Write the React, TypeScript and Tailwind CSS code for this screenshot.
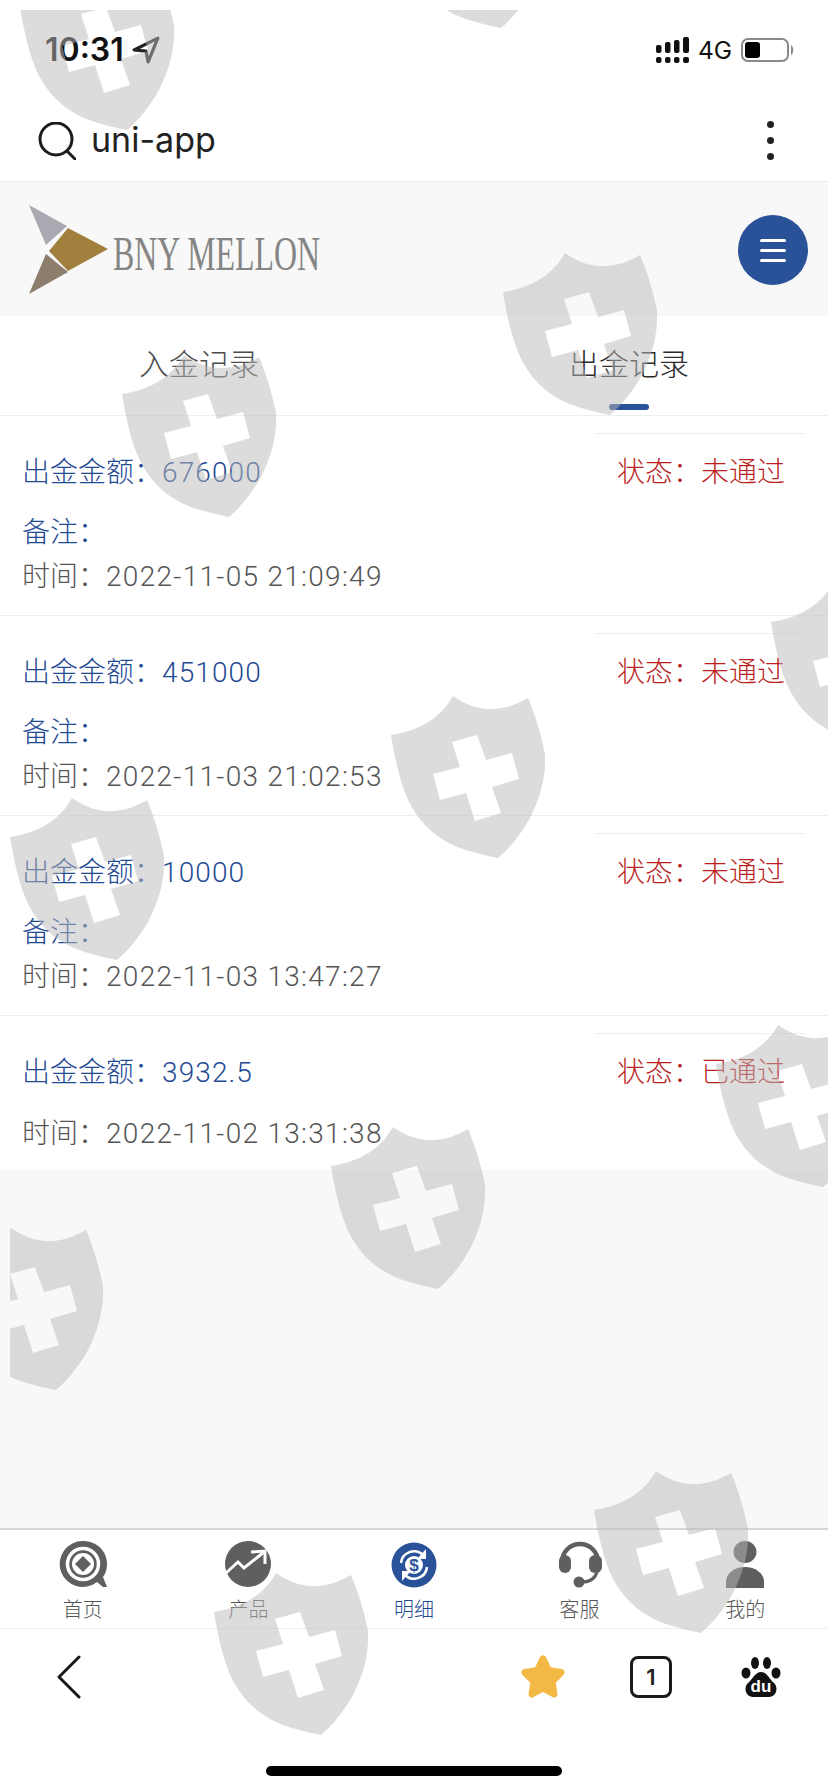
import React from "react";

const SANS = "font-['Roboto','Noto_Sans_CJK_SC',sans-serif]";
const shields: [number, number][] = [
  [20, -32], [394, -134], [503, 253], [122, 355], [771, 583], [391, 696], [10, 798],
  [716, 1025], [331, 1127], [-51, 1228], [594, 1471], [214, 1573],
];

function Watermarks() {
  return (
    <div className="absolute left-[10px] top-[10px] w-[818px] h-[1782px] overflow-hidden pointer-events-none">
      <svg width="818" height="1782" viewBox="10 10 818 1782">
        <defs>
          <path
            id="shield"
            fillRule="evenodd"
            d="M0 39C28 35 50 22 62 0C76 10 90 14 104 13C116 12 127 8 137 2C144 18 150 38 154 58C155 80 150 100 139 122C130 138 119 152 107 162C84 157 68 153 56 146C40 137 30 126 22 113C12 97 5 70 0 39ZM61 46L86 39L95 64L121 57L128 83L101 91L110 117L84 125L75 97L49 104L42 78L69 71Z"
          />
        </defs>
        {shields.map(([x, y], i) => (
          <use key={i} href="#shield" x={x} y={y} fill="rgb(185,185,185)" fillOpacity="0.5" />
        ))}
      </svg>
    </div>
  );
}

function StatusBar() {
  return (
    <div className="h-[100px] flex items-center pl-[45px] pr-[33px]">
      <span className="font-['Inter',sans-serif] font-semibold text-[32px] leading-none text-[#111]">10:31</span>
      <svg width="28" height="28" viewBox="0 0 26 26" className="ml-[8px]" fill="none">
        <path d="M24 2L2 13L13 14L15 24Z" stroke="#222" strokeWidth="3" strokeLinejoin="round" />
      </svg>
      <div className="ml-auto flex items-center">
        <svg width="34" height="26" viewBox="0 0 34 26" fill="#111">
          <rect x="0" y="8" width="5.5" height="8" rx="2" />
          <rect x="9" y="5" width="5.5" height="11" rx="2" />
          <rect x="18" y="3" width="5.5" height="13" rx="2" />
          <rect x="27" y="0" width="6" height="16" rx="2" />
          <rect x="0" y="20" width="5.5" height="6" rx="2" />
          <rect x="9" y="20" width="5.5" height="6" rx="2" />
          <rect x="18" y="20" width="5.5" height="6" rx="2" />
          <rect x="27" y="20" width="6" height="6" rx="2" />
        </svg>
        <span className="ml-[8px] font-['Inter',sans-serif] text-[24.5px] leading-none text-[#111]">4G</span>
        <div className="ml-[9px] w-[48px] h-[24px] rounded-[7px] border-2 border-[#8a8a8a] p-[2px]">
          <div className="w-[15px] h-full rounded-[3px] bg-black" />
        </div>
        <svg width="4" height="10" viewBox="0 0 4 10" className="ml-[2px]"><path d="M0 0C3 2 3 8 0 10Z" fill="#888" /></svg>
      </div>
    </div>
  );
}

function UrlBar() {
  return (
    <div className="h-[82px] border-b border-[#ececec] flex items-center pl-[38px] pr-[54px]">
      <svg width="38" height="38" viewBox="0 0 38 38" fill="none" stroke="#1c1c1c" strokeWidth="3">
        <circle cx="18" cy="17" r="16" />
        <path d="M29 29L37 37" strokeLinecap="round" />
      </svg>
      <span className="ml-[15px] font-['Inter',sans-serif] text-[34px] leading-none text-[#222] pb-[2px]">uni-app</span>
      <div className="ml-auto flex flex-col gap-[9px]">
        <div className="w-[7px] h-[7px] rounded-full bg-[#222]" />
        <div className="w-[7px] h-[7px] rounded-full bg-[#222]" />
        <div className="w-[7px] h-[7px] rounded-full bg-[#222]" />
      </div>
    </div>
  );
}

function LogoHeader() {
  return (
    <div className="h-[134px] bg-[#f8f8f8] flex items-center pl-[29px] pr-[20px]">
      <svg width="80" height="90" viewBox="0 0 80 90" className="mt-[2px]">
        <path d="M0 0L38 21L17 40Z" fill="#a9a9b1" />
        <path d="M39 23L79 44L39 66L20 46Z" fill="#a0803c" />
        <path d="M17 49L39 67L0 89Z" fill="#8c7d6d" />
      </svg>
      <div className="ml-[4px] w-[206px] mt-[10px]">
        <div className="origin-left scale-x-[0.665] whitespace-nowrap font-['Liberation_Serif',serif] text-[48px] leading-none text-[#858585]">BNY MELLON</div>
      </div>
      <div className="ml-auto w-[70px] h-[70px] rounded-full bg-[#2a5298] flex flex-col items-center justify-center gap-[7px] mt-[2px]">
        <div className="w-[26px] h-[3px] bg-white rounded-sm" />
        <div className="w-[26px] h-[3px] bg-white rounded-sm" />
        <div className="w-[26px] h-[3px] bg-white rounded-sm" />
      </div>
    </div>
  );
}

function Tabs() {
  return (
    <div className="h-[99px] bg-white grid grid-cols-2 gap-8 text-[30px] leading-[40px] font-light text-center">
      <div className="pt-[29px] text-[#4d4d4d]">入金记录</div>
      <div className="pt-[29px] text-[#2b2b2b] flex flex-col items-center">
        <span>出金记录</span>
        <div className="mt-[19px] w-[40px] h-[6px] rounded-full bg-[#2a5298]" />
      </div>
    </div>
  );
}

type Row = { amount: string; time: string; status: string; note: boolean };
const rows: Row[] = [
  { amount: "676000", time: "2022-11-05 21:09:49", status: "未通过", note: true },
  { amount: "451000", time: "2022-11-03 21:02:53", status: "未通过", note: true },
  { amount: "10000", time: "2022-11-03 13:47:27", status: "未通过", note: true },
  { amount: "3932.5", time: "2022-11-02 13:31:38", status: "已通过", note: false },
];

function RecordRow({ r }: { r: Row }) {
  return (
    <div className={`${r.note ? "h-[200px]" : "h-[155px]"} border-t border-[#eeeeee] bg-white flex justify-between text-[28px] leading-[40px] font-light`}>
      <div className="pl-[22px] pt-[37px]">
        <div className="text-[#1f4a94] h-[40px]">
          出金金额：<span className="tracking-[1.1px]">{r.amount}</span>
        </div>
        {r.note ? <div className="text-[#1f4a94] h-[40px] mt-[20px]">备注：</div> : null}
        <div className={`text-[#555] h-[40px] ${r.note ? "mt-[4px]" : "mt-[21px]"}`}>
          时间：<span className="tracking-[1.3px]">{r.time}</span>
        </div>
      </div>
      <div className="mt-[17px] mr-[23px] w-[210px] h-[62px] border-t border-[#eeeeee] pl-[22px] pt-[19px] text-[#bb1f1f] whitespace-nowrap">
        状态：{r.status}
      </div>
    </div>
  );
}

const gray = "#5f5f5f";
const NavIcons: Record<string, React.ReactNode> = {
  home: (
    <svg width="48" height="48" viewBox="0 0 48 48">
      <path d="M24 1A23 23 0 1 0 38 42L44 47H48L44 37A23 23 0 0 0 24 1Z" fill={gray} />
      <circle cx="24" cy="24" r="15.5" fill="none" stroke="#fff" strokeWidth="3.5" />
      <circle cx="24" cy="24" r="11" fill="#fff" />
      <path d="M24 16L32 24L24 32L16 24Z" fill={gray} />
    </svg>
  ),
  chart: (
    <svg width="48" height="48" viewBox="0 0 48 48">
      <circle cx="24" cy="24" r="23" fill={gray} />
      <path d="M2 33L14 22L20 28L40 12" fill="none" stroke="#fff" strokeWidth="3" />
      <path d="M27 12L41 11L41 24" fill="none" stroke="#fff" strokeWidth="3" />
    </svg>
  ),
  money: (
    <svg width="48" height="48" viewBox="0 0 48 48">
      <circle cx="24" cy="25" r="22.5" fill="#2a5298" />
      <circle cx="24" cy="25" r="9" fill="#fff" />
      <text x="24" y="31" textAnchor="middle" fontSize="17" fontWeight="700" fontFamily="Liberation Sans" fill="#2a5298">$</text>
      <path d="M11 23A13 13 0 0 1 33 15" fill="none" stroke="#fff" strokeWidth="2.5" />
      <path d="M37 27A13 13 0 0 1 15 35" fill="none" stroke="#fff" strokeWidth="2.5" />
      <path d="M36 9V19H27Z" fill="#fff" />
      <path d="M12 41V31H21Z" fill="#fff" />
    </svg>
  ),
  service: (
    <svg width="48" height="48" viewBox="0 0 48 48">
      <path d="M6 22A18 18 0 0 1 42 22" fill="none" stroke={gray} strokeWidth="4.5" />
      <rect x="3" y="15" width="12" height="18" rx="6" fill={gray} />
      <rect x="33" y="15" width="13" height="18" rx="6" fill={gray} />
      <path d="M41 32C39 39 33 42 26 42" fill="none" stroke={gray} strokeWidth="3" />
      <circle cx="23" cy="42" r="5.5" fill={gray} />
    </svg>
  ),
  user: (
    <svg width="48" height="48" viewBox="0 0 48 48">
      <ellipse cx="24" cy="12" rx="11.5" ry="11" fill={gray} />
      <path d="M5 48V42C5 33 14 27 24 27C34 27 43 33 43 42V48Z" fill={gray} />
    </svg>
  ),
};

const navItems = [
  { key: "home", label: "首页" },
  { key: "chart", label: "产品" },
  { key: "money", label: "明细", active: true },
  { key: "service", label: "客服" },
  { key: "user", label: "我的" },
];

function BottomNav() {
  return (
    <div className="border-t-2 border-b border-t-[#d6d6d6] border-b-[#eeeeee] bg-white h-[101px] grid grid-cols-5">
      {navItems.map((n) => (
        <div key={n.key} className="flex flex-col items-center pt-[10px]">
          {NavIcons[n.key]}
          <span className={`mt-[10px] text-[20px] leading-[24px] font-light ${n.active ? "text-[#1f4a94]" : "text-[#555]"}`}>{n.label}</span>
        </div>
      ))}
    </div>
  );
}

function Toolbar() {
  return (
    <div className="bg-white flex-none h-[163px]">
      <div className="h-[95px] flex items-center pl-[56px] pr-[47px]">
        <svg width="26" height="44" viewBox="0 0 26 44" fill="none">
          <path d="M23 2L3 22L23 42" stroke="#1a1a1a" strokeWidth="3" strokeLinecap="round" strokeLinejoin="round" />
        </svg>
        <svg width="46" height="44" viewBox="0 0 46 44" className="ml-auto">
          <path
            d="M23 4L28.5 15.5L41 17.5L32 26.5L34 39L23 33L12 39L14 26.5L5 17.5L17.5 15.5Z"
            fill="#f4b844"
            stroke="#f4b844"
            strokeWidth="7"
            strokeLinejoin="round"
          />
        </svg>
        <div className="ml-[64px] w-[42px] h-[42px] rounded-[8px] border-[3px] border-[#1a1a1a] flex items-center justify-center font-['Inter',sans-serif] font-semibold text-[22px] leading-none text-[#222]">
          1
        </div>
        <svg width="40" height="42" viewBox="0 0 40 42" className="ml-[69px]">
          <ellipse cx="5" cy="17" rx="4.5" ry="5.5" fill="#111" />
          <ellipse cx="14" cy="7" rx="4" ry="6" fill="#111" />
          <ellipse cx="26" cy="7" rx="4" ry="6" fill="#111" />
          <ellipse cx="35" cy="17" rx="4.5" ry="5.5" fill="#111" />
          <path d="M20 16C14 16 12 23 7 27C2 32 5 41 12 41H28C35 41 38 32 33 27C28 23 26 16 20 16Z" fill="#111" />
          <text x="20" y="36" textAnchor="middle" fontSize="17" fontWeight="700" fontFamily="Liberation Sans" fill="#fff">du</text>
        </svg>
      </div>
      <div className="mt-[42px] mx-auto w-[296px] h-[10px] rounded-full bg-black" />
    </div>
  );
}

export default function App() {
  return (
    <div className={`relative w-[828px] h-[1792px] bg-white flex flex-col overflow-hidden ${SANS}`}>
      <StatusBar />
      <UrlBar />
      <LogoHeader />
      <Tabs />
      {rows.map((r) => (
        <RecordRow key={r.time} r={r} />
      ))}
      <div className="flex-1 bg-[#f8f8f8]" />
      <BottomNav />
      <Toolbar />
      <Watermarks />
    </div>
  );
}
